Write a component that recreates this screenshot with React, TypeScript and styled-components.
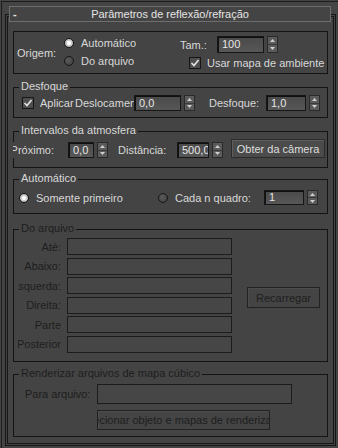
import styled, { createGlobalStyle } from 'styled-components'

const GlobalStyle = createGlobalStyle`
  html, body {
    margin: 0;
    padding: 0;
    background: #444;
  }
  body {
    font-family: "Liberation Sans", Arial, sans-serif;
    font-size: 11px;
    color: #d8d8d8;
  }
`

const Page = styled.div`
  width: 338px;
  height: 448px;
  overflow: hidden;
  background: #444;
  padding: 1px 0 0 1px;
  box-sizing: border-box;
`

const Frame = styled.div`
  height: 447px;
  border-top: 1px solid #1c1c1c;
  border-left: 1px solid #1c1c1c;
  padding: 12px 0 0 3px;
  box-sizing: border-box;
`

const Rollout = styled.div`
  width: 331px;
  height: 432px;
  box-sizing: border-box;
  border: 1px solid #161616;
  box-shadow: inset 0 0 0 1px #444, inset 0 0 0 2px #161616;
  display: flex;
  flex-direction: column;
`

const TitleBar = styled.div`
  margin: -9px 4px 0 3px;
  height: 16px;
  box-sizing: border-box;
  border: 1px solid #6e6e6e;
  background: #444;
  display: grid;
  grid-template-columns: 1fr auto 1fr;
  align-items: center;
  line-height: 14px;
  color: #e4e4e4;
`

const Toggle = styled.span`
  padding-left: 3px;
  font-weight: bold;
`

const Group = styled.div<{ $mt: number; $h: number }>`
  margin: ${p => p.$mt}px 7px 0 7px;
  height: ${p => p.$h}px;
  box-sizing: border-box;
  border: 1px solid #141414;
  display: flex;
  flex-direction: column;
`

const Legend = styled.div<{ $dim?: boolean }>`
  margin: -9px 0 0 5px;
  padding: 0 2px;
  width: fit-content;
  height: 14px;
  line-height: 14px;
  background: #444;
  white-space: nowrap;
  color: ${p => (p.$dim ? '#1e1e1e' : '#d8d8d8')};
`

const Row = styled.div<{ $mt?: number; $h: number; $pl?: number; $align?: string }>`
  display: flex;
  align-items: ${p => p.$align || 'center'};
  margin-top: ${p => p.$mt || 0}px;
  height: ${p => p.$h}px;
  padding-left: ${p => p.$pl || 0}px;
  white-space: nowrap;
`

const Column = styled.div<{ $mt?: number; $w?: number; $gap?: number }>`
  display: flex;
  flex-direction: column;
  flex: none;
  margin-top: ${p => p.$mt || 0}px;
  width: ${p => (p.$w ? `${p.$w}px` : 'auto')};
  gap: ${p => p.$gap || 0}px;
`

const Label = styled.span<{ $w?: number; $ml?: number; $right?: boolean; $dim?: boolean; $mt?: number }>`
  display: flex;
  justify-content: ${p => (p.$right ? 'flex-end' : 'flex-start')};
  width: ${p => (p.$w ? `${p.$w}px` : 'auto')};
  flex: none;
  margin-left: ${p => p.$ml || 0}px;
  margin-top: ${p => p.$mt || 0}px;
  overflow: hidden;
  white-space: nowrap;
  line-height: 16px;
  background: #444;
  color: ${p => (p.$dim ? '#1e1e1e' : '#d8d8d8')};
`

const Field = styled.div<{ $w: number; $h: number; $ml?: number; $dim?: boolean }>`
  width: ${p => p.$w}px;
  height: ${p => p.$h}px;
  margin-left: ${p => p.$ml || 0}px;
  flex: none;
  box-sizing: border-box;
  overflow: hidden;
  white-space: nowrap;
  padding-left: 4px;
  line-height: ${p => p.$h - 2}px;
  color: #e6e6e6;
  border: 1px solid ${p => (p.$dim ? '#1c1c1c' : '#161616')};
  background: ${p => (p.$dim ? '#464646' : 'linear-gradient(#4a4a4a, #575757)')};
  box-shadow: ${p => (p.$dim ? 'none' : 'inset 1px 1px 0 #101010')};
`

const SpinBox = styled.div<{ $h: number }>`
  width: 11px;
  height: ${p => p.$h}px;
  margin-left: 3px;
  flex: none;
  box-sizing: border-box;
  border: 1px solid #2a2a2a;
  background: #5b5b5b;
  display: flex;
  flex-direction: column;
`

const SpinHalf = styled.div<{ $top?: boolean }>`
  flex: 1;
  display: flex;
  align-items: center;
  justify-content: center;
  border-bottom: ${p => (p.$top ? '1px solid #3a3a3a' : 'none')};
`

const Button = styled.div<{ $w: number; $h: number; $ml?: number; $mt?: number; $dim?: boolean }>`
  width: ${p => p.$w}px;
  height: ${p => p.$h}px;
  margin-left: ${p => p.$ml || 0}px;
  margin-top: ${p => p.$mt || 0}px;
  flex: none;
  box-sizing: border-box;
  display: flex;
  align-items: center;
  justify-content: center;
  overflow: hidden;
  white-space: nowrap;
  border: 1px solid ${p => (p.$dim ? '#222' : '#2c2c2c')};
  background: ${p => (p.$dim ? '#444' : '#4b4b4b')};
  box-shadow: ${p => (p.$dim ? 'inset 1px 1px 0 #4c4c4c' : 'inset 1px 1px 0 #5e5e5e')};
  color: ${p => (p.$dim ? '#1e1e1e' : '#dedede')};
`

const Radio = styled.span<{ $on?: boolean }>`
  width: 10px;
  height: 10px;
  flex: none;
  box-sizing: border-box;
  border-radius: 50%;
  border: 1px solid #181818;
  background: ${p =>
    p.$on
      ? 'radial-gradient(circle, #ffffff 0 1.5px, #cfcfcf 2.5px, #9a9a9a 100%)'
      : 'radial-gradient(circle at 40% 40%, #5c5c5c, #3a3a3a)'};
`

const Option = styled.div<{ $w?: number; $h?: number }>`
  display: flex;
  align-items: center;
  gap: 7px;
  width: ${p => (p.$w ? `${p.$w}px` : 'auto')};
  height: ${p => (p.$h ? `${p.$h}px` : 'auto')};
  flex: none;
  white-space: nowrap;
`

const CheckBox = styled.span<{ $ml?: number }>`
  width: 12px;
  height: 12px;
  margin-left: ${p => p.$ml || 0}px;
  margin-right: 6px;
  flex: none;
  box-sizing: border-box;
  border: 1px solid #161616;
  background: #4e4e4e;
  display: flex;
  align-items: center;
  justify-content: center;
`

const Spinner = ({ h }: { h: number }) => (
  <SpinBox $h={h}>
    <SpinHalf $top>
      <svg width="5" height="3" viewBox="0 0 5 3">
        <path d="M0 3 L2.5 0 L5 3 Z" fill="#d0d0d0" />
      </svg>
    </SpinHalf>
    <SpinHalf>
      <svg width="5" height="3" viewBox="0 0 5 3">
        <path d="M0 0 L2.5 3 L5 0 Z" fill="#d0d0d0" />
      </svg>
    </SpinHalf>
  </SpinBox>
)

const Check = ({ ml }: { ml?: number }) => (
  <CheckBox $ml={ml}>
    <svg width="10" height="10" viewBox="0 0 10 10">
      <path d="M1.5 5 L4 7.5 L8.5 2" stroke="#e2e2e2" strokeWidth="1.7" fill="none" />
    </svg>
  </CheckBox>
)

const fileRows = ['Até:', 'Abaixo:', 'Esquerda:', 'Direita:', 'Parte', 'Posterior']

const App = () => {
  return (
    <Page>
      <GlobalStyle />
      <Frame>
        <Rollout>
          <TitleBar>
            <Toggle>-</Toggle>
            <span>Parâmetros de reflexão/refração</span>
            <span />
          </TitleBar>

          <Group $mt={9} $h={43}>
            <Row $h={41} $pl={3} $align="flex-start">
              <Label $w={47} $mt={13}>Origem:</Label>
              <Column $w={116} $mt={2}>
                <Option $h={18}>
                  <Radio $on />
                  Automático
                </Option>
                <Option $h={18}>
                  <Radio />
                  Do arquivo
                </Option>
              </Column>
              <Column>
                <Row $mt={4} $h={17}>
                  <Label $w={37}>Tam.:</Label>
                  <Field $w={47} $h={17}>100</Field>
                  <Spinner h={17} />
                </Row>
                <Row $mt={3} $h={13}>
                  <Check ml={9} />
                  <span>Usar mapa de ambiente</span>
                </Row>
              </Column>
            </Row>
          </Group>

          <Group $mt={13} $h={31}>
            <Legend>Desfoque</Legend>
            <Row $mt={2} $h={16} $pl={8}>
              <Check />
              <Label $w={35}>Aplicar</Label>
              <Label $w={59}>Deslocamento:</Label>
              <Field $w={47} $h={16}>0,0</Field>
              <Spinner h={16} />
              <Label $w={57} $ml={14}>Desfoque:</Label>
              <Field $w={40} $h={16}>1,0</Field>
              <Spinner h={16} />
            </Row>
          </Group>

          <Group $mt={13} $h={37}>
            <Legend>Intervalos da atmosfera</Legend>
            <Row $mt={2} $h={19} $align="flex-end">
              <Label $w={41} $ml={-1} $right>Próximo:</Label>
              <Field $w={26} $h={16} $ml={14}>0,0</Field>
              <Spinner h={16} />
              <Label $w={59} $ml={10}>Distância:</Label>
              <Field $w={32} $h={16}>500,0</Field>
              <Spinner h={16} />
              <Button $w={94} $h={19} $ml={8}>Obter da câmera</Button>
            </Row>
          </Group>

          <Group $mt={11} $h={35}>
            <Legend>Automático</Legend>
            <Row $mt={5} $h={15} $pl={5}>
              <Option $w={139}>
                <Radio $on />
                Somente primeiro
              </Option>
              <Option $w={106}>
                <Radio />
                Cada n quadro:
              </Option>
              <Field $w={40} $h={15}>1</Field>
              <Spinner h={15} />
            </Row>
          </Group>

          <Group $mt={15} $h={133}>
            <Legend $dim>Do arquivo</Legend>
            <Row $mt={3} $h={115} $pl={4} $align="flex-start">
              <Column $gap={2.6}>
                {fileRows.map(name => (
                  <Row key={name} $h={17}>
                    <Label $w={43} $right $dim>{name}</Label>
                    <Field $w={165} $h={17} $ml={6} $dim />
                  </Row>
                ))}
              </Column>
              <Button $w={73} $h={21} $ml={15} $mt={49} $dim>Recarregar</Button>
            </Row>
          </Group>

          <Group $mt={12} $h={63}>
            <Legend $dim>Renderizar arquivos de mapa cúbico</Legend>
            <Row $mt={4} $h={20} $pl={11}>
              <Label $w={72} $dim>Para arquivo:</Label>
              <Field $w={195} $h={20} $dim />
            </Row>
            <Row $mt={6} $h={20} $pl={83}>
              <Button $w={173} $h={20} $dim>Selecionar objeto e mapas de renderização</Button>
            </Row>
          </Group>
        </Rollout>
      </Frame>
    </Page>
  )
}

export default App
